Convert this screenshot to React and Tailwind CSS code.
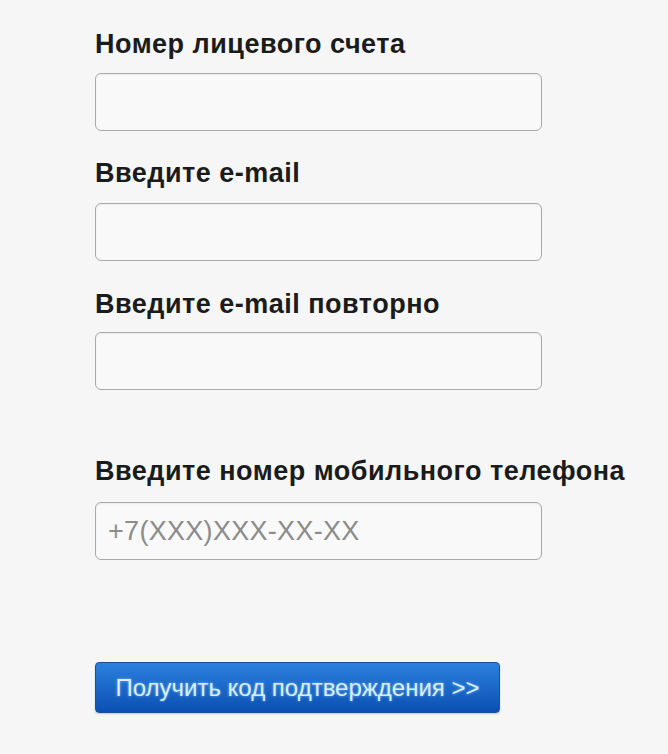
export default function App() {
  const label = "block text-[27px] leading-[30px] font-bold tracking-[0.5px] text-[#1b1b1b] whitespace-nowrap";
  const input = "block w-[447px] h-[58px] rounded-[6px] border border-[#a9a9a9] bg-[#f9f9f9] shadow-[inset_0_1px_2px_rgba(0,0,0,0.06)]";
  return (
    <div
      className="w-[668px] h-[754px] bg-[#f6f6f6] pl-[95px] pt-[29px]"
      style={{ fontFamily: '"Liberation Sans", Arial, sans-serif' }}
    >
      <label className={label}>Номер лицевого счета</label>
      <div className={`${input} mt-[14px]`} />
      <label className={`${label} mt-[27px]`}>Введите e-mail</label>
      <div className={`${input} mt-[15px]`} />
      <label className={`${label} mt-[28px]`}>Введите e-mail повторно</label>
      <div className={`${input} mt-[13px]`} />
      <label className={`${label} mt-[66px]`}>Введите номер мобильного телефона</label>
      <div className={`${input} mt-[16px] flex items-center pl-[12px]`}>
        <span className="text-[27px] text-[#8c8c8c] font-light tracking-[0.3px]">+7(XXX)XXX-XX-XX</span>
      </div>
      <button className="mt-[102px] w-[405px] h-[51px] rounded-[4px] border border-[#1a4f99] bg-gradient-to-b from-[#2c80dd] to-[#0b4fb3] text-[24px] text-[#d8eeff] shadow-[0_1px_2px_rgba(0,0,0,0.2)] [text-shadow:0_0_3px_rgba(160,220,255,0.7)]">
        Получить код подтверждения &gt;&gt;
      </button>
    </div>
  );
}
